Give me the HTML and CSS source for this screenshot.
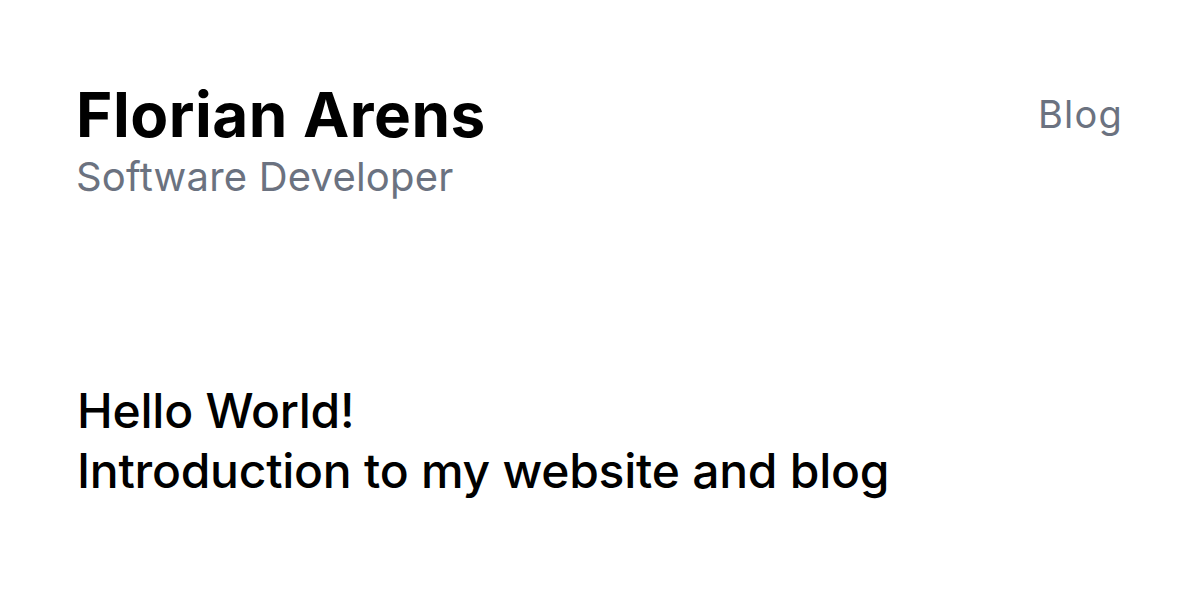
FILE: index.html
```html
<!DOCTYPE html>
<html lang="en">
<head>
<meta charset="utf-8">
<title>Florian Arens</title>
<link rel="stylesheet" href="styles.css">
</head>
<body>
<div class="page">
  <header class="header">
    <div class="brand">
      <h1 class="name">Florian Arens</h1>
      <p class="role">Software Developer</p>
    </div>
    <nav class="nav"><a class="nav-link" href="#">Blog</a></nav>
  </header>
  <main class="intro">
    <p class="intro-line">Hello World!</p>
    <p class="intro-line">Introduction to my website and blog</p>
  </main>
</div>
</body>
</html>
```
FILE: styles.css
```css
html, body {
  margin: 0;
  padding: 0;
  background: #ffffff;
}
body {
  font-family: Inter, "Noto Sans", sans-serif;
  color: #000000;
}
.page {
  width: 1200px;
  height: 600px;
  box-sizing: border-box;
  padding: 84px 77px 0 76px;
  display: flex;
  flex-direction: column;
}
.header {
  display: flex;
  justify-content: space-between;
  align-items: flex-start;
}
.name {
  margin: 0;
  font-size: 62px;
  font-weight: 700;
  line-height: 1;
  letter-spacing: 0.5px;
}
.role {
  margin: 11px 0 0;
  font-size: 40px;
  line-height: 1;
  letter-spacing: 0.2px;
  color: #6b7280;
}
.nav {
  padding-top: 11px;
}
.nav-link {
  display: block;
  font-size: 38px;
  line-height: 1;
  letter-spacing: 1.2px;
  color: #6b7280;
  text-decoration: none;
}
.intro {
  margin-top: 184px;
  padding-left: 1px;
}
.intro-line {
  margin: 0;
  font-size: 48px;
  font-weight: 500;
  line-height: 60px;
  letter-spacing: -0.25px;
}
```
